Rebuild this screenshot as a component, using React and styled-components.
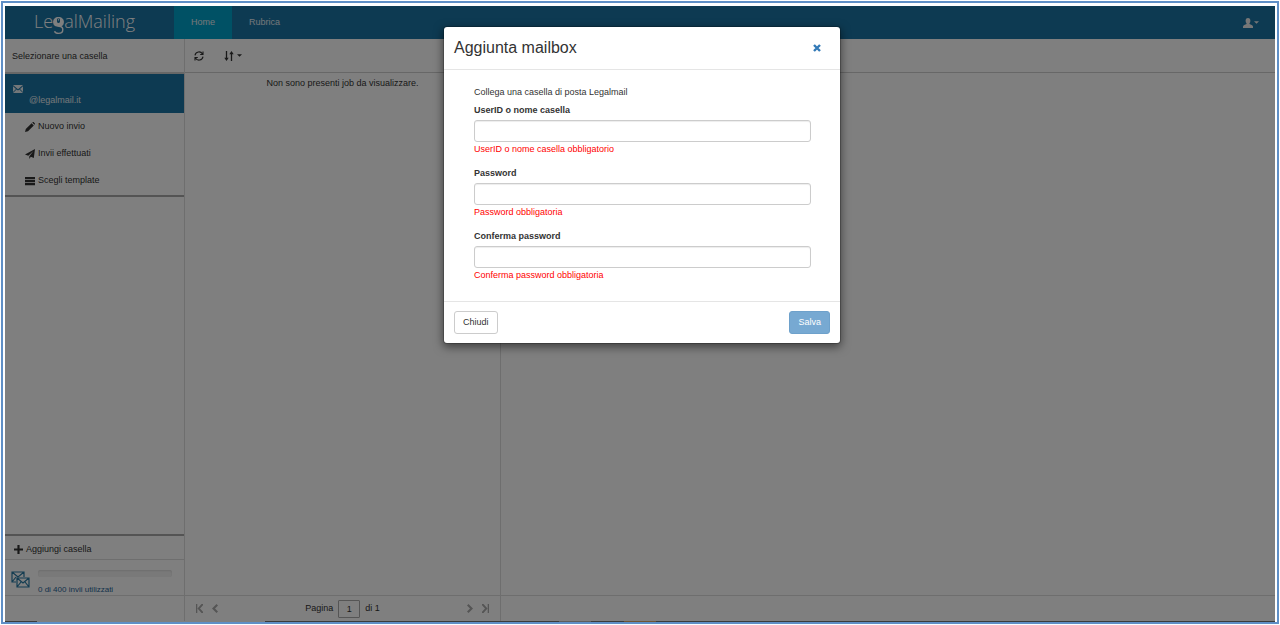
import React from "react";
import styled, { createGlobalStyle } from "styled-components";

const Global = createGlobalStyle`
  *, *::before, *::after { box-sizing: border-box; }
  html, body, #root { height: 100%; }
  body { margin: 0; background: #fff; }
  button, input { font: inherit; color: inherit; }
`;

const Page = styled.div`
  height: 100%;
  min-height: 560px;
  padding: 1px;
  font: 9px/15px "Liberation Sans", Arial, sans-serif;
  color: #333;
`;

const Frame = styled.div`
  height: 100%;
  border: 2px solid #5f8fc6;
  padding: 3px 2px 0;
`;

const Screen = styled.div`
  position: relative;
  height: 100%;
  display: flex;
  flex-direction: column;
  background: #fff;
`;

const Header = styled.header`
  display: flex;
  height: 33px;
  flex: none;
  background: #1b74a4;
  color: #fff;
`;

const Logo = styled.div`
  width: 169px;
  padding-left: 29px;
  display: flex;
  font: 300 18px/30px "Open Sans", "Noto Sans", sans-serif;
`;

const LogoG = styled.svg`
  width: 11px;
  height: 20px;
  margin-top: 10px;
`;

const NavLink = styled.a`
  padding: 0 17px;
  line-height: 33px;
  color: #e6eef3;
  text-decoration: none;
  background: ${(p) => (p.$active ? "#00a3ca" : "transparent")};
`;

const UserButton = styled.button`
  margin-left: auto;
  margin-right: 16px;
  padding: 0;
  border: 0;
  background: none;
  color: #eee;
  display: flex;
  align-items: center;
  gap: 1px;
`;

const Columns = styled.div`
  flex: 1;
  min-height: 0;
  display: flex;
`;

const Sidebar = styled.aside`
  width: 180px;
  flex: none;
  display: flex;
  flex-direction: column;
  border-right: 1px solid #dcdcdc;
`;

const SidebarTitle = styled.div`
  height: 35px;
  padding: 0 7px;
  line-height: 35px;
  border-bottom: 2px solid #cfcfcf;
`;

const Mailbox = styled.div`
  height: 39px;
  padding: 8px 8px 0;
  background: #1b74a4;
  color: #e6eef3;
`;

const MailboxName = styled.div`
  padding-left: 16px;
  line-height: 10px;
`;

const MailboxIcon = styled.div`
  height: 13px;
  display: flex;
  align-items: center;
`;

const Menu = styled.nav`
  display: flex;
  flex-direction: column;
  padding-bottom: 1px;
  border-bottom: 2px solid #a8a8a8;
`;

const MenuLink = styled.a`
  display: flex;
  align-items: center;
  gap: 3px;
  height: 27px;
  padding-left: 20px;
  color: #333;
  text-decoration: none;
`;

const SidebarFoot = styled.div`
  margin-top: auto;
  border-top: 2px solid #a8a8a8;
`;

const AddButton = styled.button`
  width: 100%;
  height: 24px;
  padding: 3px 9px 0;
  border: 0;
  border-bottom: 1px solid #dcdcdc;
  background: none;
  display: flex;
  align-items: center;
  gap: 3px;
`;

const Usage = styled.div`
  display: flex;
  gap: 8px;
  height: 36px;
  padding: 10px 12px 0 6px;
  border-bottom: 1px solid #dcdcdc;
`;

const UsageText = styled.div`
  flex: 1;
  color: #2a6496;
  font-size: 8px;
`;

const Progress = styled.div`
  height: 7px;
  margin-bottom: 5px;
  border-radius: 2px;
  background: #f3f3f3;
  box-shadow: inset 0 1px 2px rgba(0, 0, 0, 0.1);
`;

const Spacer = styled.div`
  height: 25px;
`;

const Jobs = styled.section`
  width: 316px;
  flex: none;
  display: flex;
  flex-direction: column;
  border-right: 1px solid #dcdcdc;
`;

const Detail = styled.section`
  flex: 1;
  display: flex;
  flex-direction: column;
`;

const Toolbar = styled.div`
  display: flex;
  align-items: center;
  gap: 20px;
  height: 34px;
  padding-left: 9px;
  border-bottom: 1px solid #cfcfcf;
`;

const IconButton = styled.button`
  display: flex;
  align-items: center;
  gap: 3px;
  padding: 0;
  border: 0;
  background: none;
`;

const Empty = styled.p`
  flex: 1;
  margin: 0;
  padding-top: 3px;
  text-align: center;
`;

const Pager = styled.div`
  display: flex;
  align-items: center;
  justify-content: space-between;
  height: 26px;
  padding: 0 11px;
  border-top: 1px solid #dcdcdc;
`;

const PagerGroup = styled.div`
  display: flex;
  align-items: center;
  gap: ${(p) => p.$gap}px;
  color: ${(p) => (p.$muted ? "#aaa" : "#333")};
`;

const PageInput = styled.input`
  width: 22px;
  height: 18px;
  padding: 0;
  text-align: center;
  border: 1px solid #aaa;
  border-radius: 1px;
  background: #fff;
`;

const Strip = styled.div`
  display: flex;
  flex: none;
  height: 1px;
  background: #777;
`;

const StripPart = styled.div`
  width: ${(p) => p.$w}px;
  background: ${(p) => p.$c || "transparent"};
`;

const Backdrop = styled.div`
  position: absolute;
  inset: 0;
  padding: 20px 0 0 4px;
  background: rgba(0, 0, 0, 0.5);
`;

const Dialog = styled.form`
  width: 398px;
  margin: 0 auto;
  background: #fff;
  border: 1px solid rgba(0, 0, 0, 0.2);
  background-clip: padding-box;
  border-radius: 4px;
  box-shadow: 0 3px 10px rgba(0, 0, 0, 0.5);
`;

const DialogHead = styled.div`
  display: flex;
  align-items: center;
  justify-content: space-between;
  height: 43px;
  padding: 0 19px 0 10px;
  border-bottom: 1px solid #e5e5e5;
`;

const Title = styled.h1`
  margin: 0;
  font-size: 16px;
  font-weight: 400;
  line-height: 20px;
`;

const DialogBody = styled.div`
  padding: 15px 29px 18px 30px;
`;

const Intro = styled.p`
  margin: 0;
`;

const Field = styled.div`
  display: flex;
  flex-direction: column;
  & + & { margin-top: 6px; }
`;

const Label = styled.label`
  line-height: 20px;
  font-weight: 700;
`;

const Input = styled.input`
  width: 100%;
  height: 22px;
  padding: 0 8px;
  border: 1px solid #ccc;
  border-radius: 3px;
  box-shadow: inset 0 1px 1px rgba(0, 0, 0, 0.075);
`;

const FieldError = styled.span`
  color: #f00;
`;

const DialogFoot = styled.div`
  display: flex;
  justify-content: space-between;
  padding: 9px 10px;
  border-top: 1px solid #e5e5e5;
`;

const Button = styled.button`
  height: 23px;
  padding: 0 8px;
  border: 1px solid ${(p) => (p.$primary ? "#6ea1cb" : "#ccc")};
  border-radius: 3px;
  background: ${(p) => (p.$primary ? "#77a9d2" : "#fff")};
  color: ${(p) => (p.$primary ? "#fff" : "#333")};
`;

const Icon = ({ w = 10, h = w, box = "0 0 10 10", children }) => (
  <svg width={w} height={h} viewBox={box} fill="currentColor" aria-hidden="true">
    {children}
  </svg>
);

const Caret = () => (
  <Icon w={5} h={3} box="0 0 5 3"><path d="M0 .3h5L2.500 2.800z" /></Icon>
);

const fields = [
  { id: "user", type: "text", label: "UserID o nome casella", error: "UserID o nome casella obbligatorio" },
  { id: "password", type: "password", label: "Password", error: "Password obbligatoria" },
  { id: "confirm", type: "password", label: "Conferma password", error: "Conferma password obbligatoria" },
];

export default function App() {
  return (
    <Page>
      <Global />
      <Frame>
        <Screen>
          <Header>
            <Logo>
              <span>Le</span>
              <LogoG viewBox="0 0 11 20" aria-label="g">
                <path fill="#fff" d="M5.500 1C8.700 1 10.900 3 10.900 6c0 1.600-.7 2.900-1.700 3.900L5.500 11 1.800 9.900C.8 8.900.1 7.600.1 6c0-3 2.200-5 5.400-5z" />
                <path fill="#1b74a4" d="M5.500 2.200c1 0 1.500.7 1.500 1.600v1.700c0 .9-.6 1.500-1.500 1.500S4 6.400 4 5.500V3.800c0-.9.500-1.600 1.500-1.600z" />
                <path stroke="#fff" strokeWidth=".8" d="M5.500 2.800v1.800" />
                <path fill="none" stroke="#fff" strokeWidth="1.400" d="M6 10.300c3 .2 3.800 1.400 3.800 3.200 0 2.400-1.800 3.900-4.300 3.900-1.900 0-3.400-.8-4-2.200" />
              </LogoG>
              <span>alMailing</span>
            </Logo>
            <NavLink href="#home" $active>Home</NavLink>
            <NavLink href="#rubrica">Rubrica</NavLink>
            <UserButton type="button" aria-label="Utente">
              <Icon w={10}><path d="M5 0c1.700 0 2.400 1.200 2.400 2.700 0 1-.3 1.900-.9 2.500v.9c1.300.7 3.500 1.200 3.500 2.500V10H0V8.600c0-1.300 2.200-1.800 3.500-2.500v-.9c-.6-.6-.9-1.500-.9-2.500C2.600 1.200 3.300 0 5 0z" /></Icon>
              <Caret />
            </UserButton>
          </Header>
          <Columns>
            <Sidebar>
              <SidebarTitle>Selezionare una casella</SidebarTitle>
              <Mailbox>
                <MailboxIcon>
                  <Icon w={10} h={8} box="0 0 10 8"><path d="M0 0h10L5 4.300zM0 1.200l3 2.700-3 3zM10 1.200v5.700l-3-3zM0 8l3.600-3.600L5 5.600l1.400-1.200L10 8z" /></Icon>
                </MailboxIcon>
                <MailboxName>@legalmail.it</MailboxName>
              </Mailbox>
              <Menu>
                <MenuLink href="#nuovo">
                  <Icon><path d="M0 10l.8-3L6.600 1.200l2.200 2.200L3 9.200zM7.200.6l.5-.4c.4-.3.800-.2 1.100.1l.9.900c.3.300.4.700.1 1.100l-.4.500z" /></Icon>
                  Nuovo invio
                </MenuLink>
                <MenuLink href="#invii">
                  <Icon><path d="M10 0L8.800 9 5.800 7.800 4.300 10V7.200L8.500 2 3.300 6.800 0 5.400z" /></Icon>
                  Invii effettuati
                </MenuLink>
                <MenuLink href="#template">
                  <Icon><path d="M0 1h10v2.200H0zM0 4h10v2.200H0zM0 7h10v2.200H0z" /></Icon>
                  Scegli template
                </MenuLink>
              </Menu>
              <SidebarFoot>
                <AddButton type="button">
                  <Icon w={9}><path d="M3.800 0h2.400v3.800H10v2.400H6.200V10H3.800V6.200H0V3.800h3.800z" /></Icon>
                  Aggiungi casella
                </AddButton>
                <Usage>
                  <svg width="19" height="19" viewBox="0 0 19 19" fill="none" stroke="#2a7ba5" strokeWidth="1.200" aria-hidden="true">
                    <path d="M5 12H1V2h12v5M1 2l6 5 6-5M1 12l4-5" />
                    <path d="M6 8h12v9H6zM6 8l6 5 6-5M6 17l4-5M18 17l-4-5" />
                  </svg>
                  <UsageText>
                    <Progress role="progressbar" aria-valuenow={0} aria-valuemax={400} aria-label="Invii utilizzati" />
                    0 di 400 invii utilizzati
                  </UsageText>
                </Usage>
                <Spacer />
              </SidebarFoot>
            </Sidebar>
            <Jobs>
              <Toolbar>
                <IconButton type="button" aria-label="Aggiorna">
                  <svg width="10" height="10" viewBox="0 0 10 10" fill="none" stroke="currentColor" strokeWidth="1.100" aria-hidden="true">
                    <path d="M1 4.300A4 4 0 0 1 8.500 3M9 5.700A4 4 0 0 1 1.500 7M9 .5v3H6.200M1 9.500v-3h2.800" />
                  </svg>
                </IconButton>
                <IconButton type="button" aria-label="Ordina">
                  <svg width="10" height="10" viewBox="0 0 10 10" aria-hidden="true">
                    <path fill="none" stroke="currentColor" strokeWidth="1.300" d="M2.500 0v8M7.500 10V2" />
                    <path fill="currentColor" d="M.3 6.700h4.400L2.500 10zM5.300 3.300h4.400L7.500 0z" />
                  </svg>
                  <Caret />
                </IconButton>
              </Toolbar>
              <Empty>Non sono presenti job da visualizzare.</Empty>
              <Pager>
                <PagerGroup $gap={9} $muted>
                  <Icon w={7} h={9} box="0 0 7 9"><path d="M0 0h1.300v9H0zM5.500 0H7v1.300L4 4.500l3 3.200V9H5.500l-4-4.500z" /></Icon>
                  <Icon w={6} h={9} box="0 0 6 9"><path d="M4.500 0L6 1.500l-3 3 3 3L4.500 9 0 4.500z" /></Icon>
                </PagerGroup>
                <PagerGroup $gap={5}>
                  <label htmlFor="page">Pagina</label>
                  <PageInput id="page" defaultValue="1" />
                  <span>di 1</span>
                </PagerGroup>
                <PagerGroup $gap={9} $muted>
                  <Icon w={6} h={9} box="0 0 6 9"><path d="M1.500 0L0 1.500l3 3-3 3L1.500 9 6 4.500z" /></Icon>
                  <Icon w={7} h={9} box="0 0 7 9"><path d="M5.700 0H7v9H5.700zM1.500 0H0v1.300l3 3.200-3 3.200V9h1.500l4-4.500z" /></Icon>
                </PagerGroup>
              </Pager>
            </Jobs>
            <Detail>
              <Toolbar />
              <Empty />
              <Pager />
            </Detail>
          </Columns>
          <Strip>
            <StripPart $w={32} />
            <StripPart $w={228} $c="#fff" />
            <StripPart $w={294} />
            <StripPart $w={32} $c="#bbb" />
            <StripPart $w={33} />
            <StripPart $w={32} $c="#e0a868" />
          </Strip>
          <Backdrop>
            <Dialog role="dialog" aria-labelledby="title">
              <DialogHead>
                <Title id="title">Aggiunta mailbox</Title>
                <IconButton type="button" aria-label="Chiudi finestra">
                  <svg width="8" height="8" viewBox="0 0 8 8" stroke="#337ab7" strokeWidth="2.400" aria-hidden="true">
                    <path d="M1 1l6 6M7 1L1 7" />
                  </svg>
                </IconButton>
              </DialogHead>
              <DialogBody>
                <Intro>Collega una casella di posta Legalmail</Intro>
                {fields.map((f) => (
                  <Field key={f.id}>
                    <Label htmlFor={f.id}>{f.label}</Label>
                    <Input id={f.id} type={f.type} aria-describedby={f.id + "-error"} />
                    <FieldError id={f.id + "-error"}>{f.error}</FieldError>
                  </Field>
                ))}
              </DialogBody>
              <DialogFoot>
                <Button type="button">Chiudi</Button>
                <Button type="submit" $primary disabled>Salva</Button>
              </DialogFoot>
            </Dialog>
          </Backdrop>
        </Screen>
      </Frame>
    </Page>
  );
}
